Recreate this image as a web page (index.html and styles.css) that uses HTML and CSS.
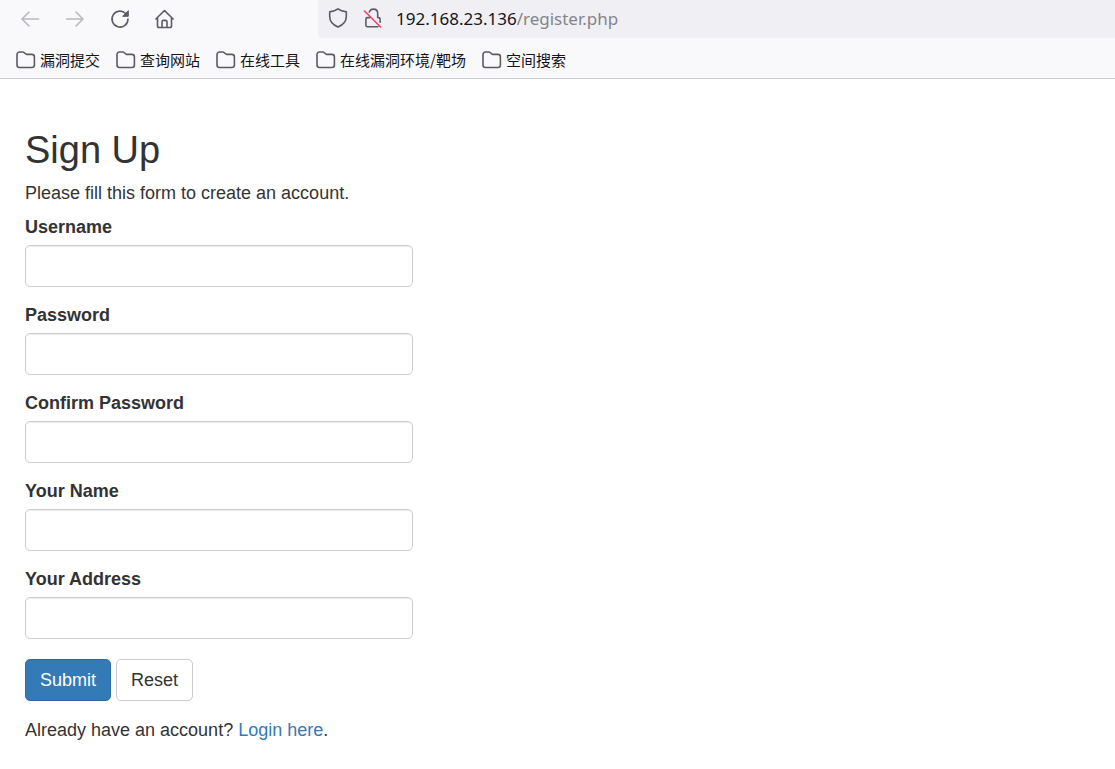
FILE: index.html
```html
<!DOCTYPE html>
<html lang="en">
<head>
<meta charset="utf-8">
<meta name="viewport" content="width=device-width, initial-scale=1">
<title>Sign Up</title>
<link rel="stylesheet" href="styles.css">
</head>
<body>
<svg class="sprite" aria-hidden="true">
  <symbol id="folder" viewBox="0 0 20 18">
    <path d="M3.500 1h3.200c.7 0 1.200.2 1.700.7l1.100 1.100c.4.4.8.6 1.400.6h5A2.500 2.500 0 0 1 18.400 5.900v8.100a2.500 2.500 0 0 1-2.500 2.500H3.500A2.500 2.500 0 0 1 1 14V3.500A2.500 2.500 0 0 1 3.500 1z"/>
  </symbol>
</svg>
<header class="browser">
  <div class="toolbar">
    <nav class="nav-buttons" aria-label="Navigation">
      <button type="button" class="icon-button" aria-label="Back" disabled>
        <svg class="icon" viewBox="0 0 20 20"><path d="M18.500 10H2M9 3l-7 7 7 7"/></svg>
      </button>
      <button type="button" class="icon-button" aria-label="Forward" disabled>
        <svg class="icon" viewBox="0 0 20 20"><path d="M1.500 10H18M11 3l7 7-7 7"/></svg>
      </button>
      <button type="button" class="icon-button" aria-label="Reload">
        <svg class="icon" viewBox="0 0 20 20"><path d="M15.900 4.700A8 8 0 1 0 18 10"/><path class="solid" d="M18.300 2v5.300H13z"/></svg>
      </button>
      <button type="button" class="icon-button" aria-label="Home">
        <svg class="icon" viewBox="0 0 20 20"><path d="M.9 10 9.500 1.500l8.600 8.500M2.500 8.700v8c0 1.100.7 1.800 1.800 1.800h10.400c1.100 0 1.800-.7 1.800-1.800v-8M7 18v-5c0-1 .6-1.600 1.500-1.600h2c.9 0 1.500.6 1.500 1.600v5"/></svg>
      </button>
    </nav>
    <div class="address-bar">
      <svg class="icon" viewBox="0 0 20 20"><path d="M10 .9c2.500 1.800 5.100 2.500 8.300 3v4.600c0 4.800-3.200 8.400-8.300 10.600C4.900 16.900 1.700 13.300 1.700 8.500V3.900C4.900 3.400 7.500 2.700 10 .9z"/></svg>
      <svg class="icon" viewBox="0 0 20 20"><path d="M6.300 4C7 2.200 8.500 1.100 10.400 1.100c2.500 0 4.300 1.800 4.300 4.500v4h.8c1 0 1.600.6 1.600 1.600v3M7 9.600H4.500c-1 0-1.600.6-1.600 1.600v6c0 1 .6 1.600 1.600 1.600H15"/><path class="strike" d="M1.500 3 17.500 19"/></svg>
      <span class="url">192.168.23.136<span class="path">/register.php</span></span>
    </div>
  </div>
  <nav class="bookmarks" aria-label="Bookmarks">
    <button type="button" class="bookmark"><svg class="folder"><use href="#folder"/></svg>漏洞提交</button>
    <button type="button" class="bookmark"><svg class="folder"><use href="#folder"/></svg>查询网站</button>
    <button type="button" class="bookmark"><svg class="folder"><use href="#folder"/></svg>在线工具</button>
    <button type="button" class="bookmark"><svg class="folder"><use href="#folder"/></svg>在线漏洞环境/靶场</button>
    <button type="button" class="bookmark"><svg class="folder"><use href="#folder"/></svg>空间搜索</button>
  </nav>
</header>
<main class="wrapper">
  <h2 class="title">Sign Up</h2>
  <p class="intro">Please fill this form to create an account.</p>
  <form>
    <div class="form-group"><label for="username">Username</label><input class="form-control" type="text" id="username"></div>
    <div class="form-group"><label for="password">Password</label><input class="form-control" type="password" id="password"></div>
    <div class="form-group"><label for="confirm">Confirm Password</label><input class="form-control" type="password" id="confirm"></div>
    <div class="form-group"><label for="name">Your Name</label><input class="form-control" type="text" id="name"></div>
    <div class="form-group"><label for="address">Your Address</label><input class="form-control" type="text" id="address"></div>
    <div class="actions">
      <button type="submit" class="btn btn-primary">Submit</button>
      <button type="reset" class="btn">Reset</button>
    </div>
    <p class="login">Already have an account? <a href="#">Login here</a>.</p>
  </form>
</main>
</body>
</html>
```
FILE: styles.css
```css
* {
  box-sizing: border-box;
}

body {
  margin: 0;
  background: #fff;
  color: #333;
  font: 18px/25px "Liberation Sans", Arial, sans-serif;
}

button,
input {
  font: inherit;
}

.sprite {
  position: absolute;
  width: 0;
  height: 0;
}

.browser {
  background: #f9f9fb;
  border-bottom: 1px solid #cccccf;
}

.toolbar {
  display: flex;
  height: 38px;
}

.nav-buttons {
  display: flex;
  align-items: center;
  flex: 0 0 318px;
  gap: 5px;
  padding-left: 10px;
}

.icon-button {
  display: flex;
  align-items: center;
  justify-content: center;
  width: 40px;
  height: 38px;
  padding: 0;
  border: 0;
  background: none;
}

.icon-button:disabled {
  opacity: 0.4;
}

.icon {
  flex: none;
  width: 20px;
  height: 20px;
  fill: none;
  stroke: #5b5b66;
  stroke-width: 1.6;
  stroke-linecap: round;
  stroke-linejoin: round;
}

.icon .solid {
  fill: #5b5b66;
  stroke-width: 1;
}

.icon .strike {
  stroke: #ff3b6b;
}

.address-bar {
  display: flex;
  align-items: center;
  flex: 1;
  gap: 15px;
  padding: 0 0 2px 10px;
  border-radius: 0 0 0 5px;
  background: #f0f0f4;
}

.url {
  margin-left: -2px;
  color: #15141a;
  font-family: "Noto Sans", sans-serif;
  font-size: 17px;
  white-space: nowrap;
}

.path {
  color: #84848b;
}

.bookmarks {
  display: flex;
  align-items: center;
  gap: 16px;
  height: 40px;
  padding: 4px 16px 0;
}

.bookmark {
  display: flex;
  align-items: center;
  gap: 4px;
  padding: 0;
  border: 0;
  background: none;
  color: #15141a;
  font: 15px/20px "Noto Sans CJK SC", sans-serif;
  white-space: nowrap;
}

.folder {
  width: 20px;
  height: 18px;
  fill: none;
  stroke: #5b5b66;
  stroke-width: 1.6;
}

.wrapper {
  width: 100%;
  max-width: 438px;
  padding: 25px;
}

.title {
  margin: 26px 0 10px;
  font-size: 38px;
  font-weight: 500;
  line-height: 41px;
}

.intro {
  margin: 0 0 9px;
}

.form-group {
  margin-bottom: 16px;
}

.form-group label {
  display: block;
  margin-bottom: 5px;
  font-weight: 700;
}

.form-control {
  display: block;
  width: 100%;
  height: 42px;
  padding: 8px 14px;
  border: 1px solid #ccc;
  border-radius: 5px;
  background: #fff;
  box-shadow: inset 0 1px 1px rgba(0, 0, 0, 0.075);
  color: #555;
}

.actions {
  display: flex;
  gap: 5px;
  margin: 20px 0 17px;
}

.btn {
  height: 42px;
  padding: 0 14px;
  border: 1px solid #ccc;
  border-radius: 5px;
  background: #fff;
  color: #333;
}

.btn-primary {
  border-color: #2e6da4;
  background: #337ab7;
  color: #fff;
}

.login {
  margin: 0;
}

.login a {
  color: #337ab7;
  text-decoration: none;
}
```
